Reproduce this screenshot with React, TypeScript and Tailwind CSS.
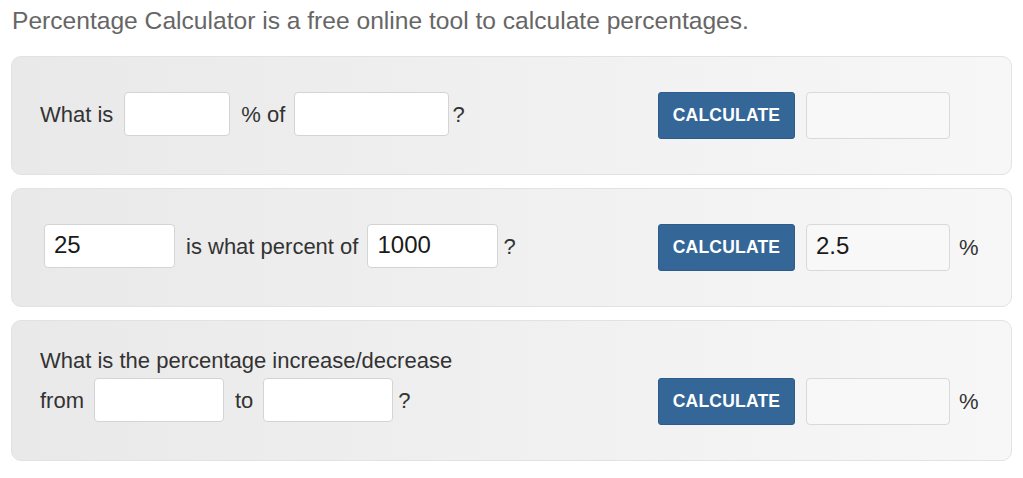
import React from "react";

const font = { fontFamily: '"Liberation Sans", Arial, sans-serif' };

function Input({ value, w, result }: { value?: string; w: string; result?: boolean }) {
  return (
    <div
      className={`${w} rounded-[4px] border flex items-center px-[9px] pb-[3px] text-[24px] text-[#1a1a1a] ${
        result ? "bg-[#f8f8f8] border-[#d9d9d9] h-[47px]" : "bg-white border-[#d4d4d4] h-[44px]"
      }`}
    >
      {value}
    </div>
  );
}

function Right({ value, pct }: { value?: string; pct?: boolean }) {
  return (
    <div className="flex items-center">
      <button className="w-[137px] h-[47px] rounded-[3px] bg-[#346798] border border-[#2d5c8a] text-white font-bold text-[17.5px] tracking-[0.2px]">
        CALCULATE
      </button>
      <div className="ml-[11px]">
        <Input w="w-[144px]" value={value} result />
      </div>
      {pct && <span className="ml-[9px] text-[22px] text-[#333]">%</span>}
    </div>
  );
}

const panel =
  "mx-[11px] rounded-[10px] border border-[#e2e2e2] bg-gradient-to-r from-[#e9e9e9] to-[#f7f7f7] pl-[28px] pb-[35px] flex";

export default function App() {
  return (
    <div className="w-[1023px] h-[478px] bg-white" style={font}>
      <div className="pl-[12px] pt-[3px] h-[56px] text-[24.6px] text-[#666]">
        Percentage Calculator is a free online tool to calculate percentages.
      </div>
      <div className={`${panel} pt-[35px] items-start`}>
        <div className="w-[618px] flex items-center text-[22px] text-[#333]">
          <span>What is</span>
          <div className="ml-[11px]">
            <Input w="w-[106px]" />
          </div>
          <span className="ml-[11px]">% of</span>
          <div className="ml-[9px]">
            <Input w="w-[155px]" />
          </div>
          <span className="ml-[3px]">?</span>
        </div>
        <Right />
      </div>
      <div className={`${panel} pt-[35px] items-start mt-[13px]`}>
        <div className="w-[618px] flex items-center text-[22px] text-[#333]">
          <div className="ml-[4px]">
            <Input w="w-[131px]" value="25" />
          </div>
          <span className="ml-[11px]">is what percent of</span>
          <div className="ml-[9px]">
            <Input w="w-[131px]" value="1000" />
          </div>
          <span className="ml-[5px]">?</span>
        </div>
        <Right value="2.5" pct />
      </div>
      <div className={`${panel} pt-[27px] items-end mt-[13px]`}>
        <div className="w-[618px] flex flex-col text-[22px] text-[#333] mb-[3px]">
          <div className="leading-[26px] mb-[4px]">What is the percentage increase/decrease</div>
          <div className="flex items-center">
            <span>from</span>
            <div className="ml-[10px]">
              <Input w="w-[130px]" />
            </div>
            <span className="ml-[11px]">to</span>
            <div className="ml-[10px]">
              <Input w="w-[130px]" />
            </div>
            <span className="ml-[5px]">?</span>
          </div>
        </div>
        <Right pct />
      </div>
    </div>
  );
}
